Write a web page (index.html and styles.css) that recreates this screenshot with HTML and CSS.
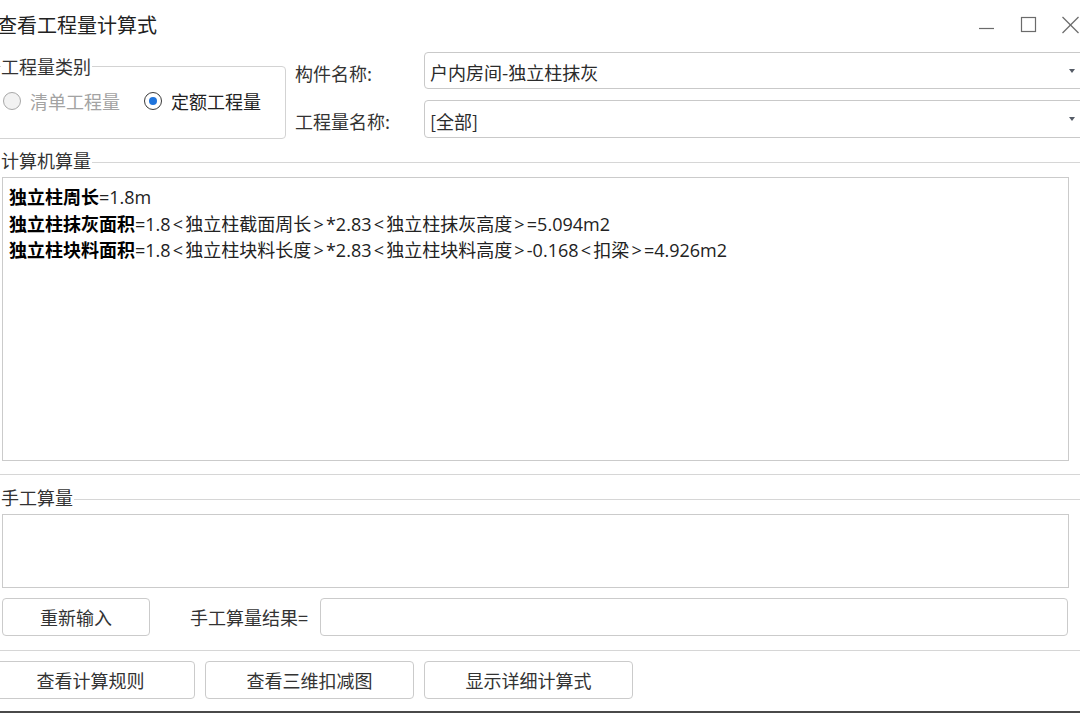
FILE: index.html
```html
<!DOCTYPE html>
<html lang="zh">
<head>
<meta charset="utf-8">
<title>查看工程量计算式</title>
<link rel="stylesheet" href="styles.css">
</head>
<body>
<div class="window">
  <div class="titlebar">
    <span class="title">查看工程量计算式</span>
    <svg class="controls" width="101" height="18" viewBox="0 0 101 18">
      <line x1="0" y1="12.5" x2="15" y2="12.5" stroke="#6b6b6b" stroke-width="1.2"/>
      <rect x="42.5" y="1.5" width="14" height="14" fill="none" stroke="#6b6b6b" stroke-width="1.2"/>
      <line x1="83.5" y1="1" x2="99.5" y2="17" stroke="#6b6b6b" stroke-width="1.2"/>
      <line x1="99.5" y1="1" x2="83.5" y2="17" stroke="#6b6b6b" stroke-width="1.2"/>
    </svg>
  </div>

  <div class="top">
    <fieldset class="group">
      <legend>工程量类别</legend>
      <div class="radios">
        <label class="radio disabled"><span class="circle"></span><span>清单工程量</span></label>
        <label class="radio"><span class="circle checked"></span><span>定额工程量</span></label>
      </div>
    </fieldset>
    <div class="fields">
      <div class="field">
        <span class="flabel">构件名称:</span>
        <div class="combo"><span class="ctext">户内房间-独立柱抹灰</span><span class="arrow"></span></div>
      </div>
      <div class="field">
        <span class="flabel">工程量名称:</span>
        <div class="combo"><span class="ctext">[全部]</span><span class="arrow"></span></div>
      </div>
    </div>
  </div>

  <div class="section-head head-auto">
    <span class="slabel">计算机算量</span><span class="sline"></span>
  </div>
  <div class="box box-auto">
    <div class="fline"><b>独立柱周长</b>=1.8m</div>
    <div class="fline"><b>独立柱抹灰面积</b>=1.8<span class="op">&lt;</span>独立柱截面周长<span class="op">&gt;</span>*2.83<span class="op">&lt;</span>独立柱抹灰高度<span class="op">&gt;</span>=5.094m2</div>
    <div class="fline"><b>独立柱块料面积</b>=1.8<span class="op">&lt;</span>独立柱块料长度<span class="op">&gt;</span>*2.83<span class="op">&lt;</span>独立柱块料高度<span class="op">&gt;</span>-0.168<span class="op">&lt;</span>扣梁<span class="op">&gt;</span>=4.926m2</div>
  </div>
  <div class="hr hr1"></div>

  <div class="section-head head-manual">
    <span class="slabel">手工算量</span><span class="sline"></span>
  </div>
  <div class="box box-manual"></div>
  <div class="manual-row">
    <button class="btn btn-reinput">重新输入</button>
    <span class="rlabel">手工算量结果=</span>
    <div class="rinput"></div>
  </div>
  <div class="hr hr2"></div>

  <div class="bottom-buttons">
    <button class="btn btn-wide btn-first">查看计算规则</button>
    <button class="btn btn-wide">查看三维扣减图</button>
    <button class="btn btn-wide">显示详细计算式</button>
  </div>
  <div class="bottom-edge"></div>
</div>
</body>
</html>
```

FILE: styles.css
```css
* { box-sizing: border-box; }

html, body {
  margin: 0;
  padding: 0;
  background: #ffffff;
}

body {
  width: 1080px;
  height: 714px;
  overflow: hidden;
  font-family: "Noto Sans CJK SC", "Microsoft YaHei", sans-serif;
  font-size: 18px;
  color: #333333;
}

.window {
  width: 1080px;
  height: 714px;
  display: flex;
  flex-direction: column;
  overflow: hidden;
}

/* title bar */
.titlebar {
  height: 50px;
  display: flex;
  align-items: center;
  flex-shrink: 0;
}

.title {
  font-size: 20px;
  line-height: 24px;
  margin-left: -3px;
  color: #222222;
}

.controls {
  margin-left: auto;
  margin-right: 0;
  display: block;
}

/* top area */
.top {
  display: flex;
  align-items: flex-start;
  margin-top: 2px;
  flex-shrink: 0;
}

.group {
  margin: 4px 0 0 -6px;
  padding: 0 0 0 6px;
  width: 292px;
  height: 83px;
  min-width: 0;
  border: 1px solid #d3d3d3;
  border-radius: 4px;
}

.group legend {
  padding: 0 1px 0 0;
  font-size: 18px;
  line-height: 20px;
  color: #333333;
}

.radios {
  display: flex;
  align-items: center;
  margin-top: 13px;
  height: 24px;
}

.radio {
  display: flex;
  align-items: center;
  line-height: 24px;
  color: #222222;
}

.radio + .radio {
  margin-left: 24px;
}

.radio.disabled {
  color: #a3a3a3;
}

.circle {
  width: 18px;
  height: 18px;
  border-radius: 50%;
  border: 1px solid #a8a8a8;
  background: #f2f2f2;
  margin: 0 9px 0 2px;
  display: flex;
  align-items: center;
  justify-content: center;
}

.circle.checked {
  border-color: #3a3a3a;
  background: #ffffff;
  margin-left: 0;
}

.circle.checked::after {
  content: "";
  width: 8px;
  height: 8px;
  border-radius: 50%;
  background: #1f74dc;
}

.fields {
  margin-left: 9px;
  flex: 1;
  display: flex;
  flex-direction: column;
  gap: 11px;
}

.field {
  display: flex;
  align-items: center;
}

.flabel {
  width: 129px;
  flex-shrink: 0;
  line-height: 22px;
  padding-top: 4px;
  color: #333333;
}

.combo {
  flex: 1;
  height: 37px;
  margin-right: -12px;
  border: 1px solid #c9c9c9;
  border-radius: 4px;
  display: flex;
  align-items: center;
  padding: 3px 0 0 5px;
}

.field + .field .combo {
  height: 38px;
}

.ctext {
  line-height: 22px;
  color: #2b2b2b;
}

.arrow {
  margin-left: auto;
  margin-right: 16px;
  width: 0;
  height: 0;
  border-left: 3.5px solid transparent;
  border-right: 3.5px solid transparent;
  border-top: 4px solid #555b66;
  margin-top: -3px;
}

/* section headers */
.section-head {
  display: flex;
  align-items: center;
  height: 20px;
  flex-shrink: 0;
}

.head-auto { margin-top: 11px; }
.head-manual { margin-top: 12px; }

.slabel {
  line-height: 20px;
  padding-left: 1px;
  color: #333333;
}

.sline {
  flex: 1;
  height: 1px;
  background: #d6d6d6;
  margin-top: 4px;
  margin-left: 1px;
}

/* text boxes */
.box {
  margin-left: 2px;
  width: 1067px;
  border: 1px solid #cbcbcb;
  flex-shrink: 0;
}

.box-auto {
  margin-top: 7px;
  height: 284px;
  padding: 6px 6px;
}

.box-manual {
  margin-top: 7px;
  height: 74px;
}

.fline {
  font-family: "Open Sans", "Noto Sans CJK SC", sans-serif;
  line-height: 25.5px;
  color: #222222;
  white-space: nowrap;
}

.fline b {
  font-family: "Noto Sans CJK SC", sans-serif;
  color: #000000;
  font-weight: 700;
}

.fline .op {
  padding: 0 2.2px;
}

.hr {
  height: 1px;
  background: #d6d6d6;
  flex-shrink: 0;
}

.hr1 { margin-top: 13px; }
.hr2 { margin-top: 14px; }

/* manual row */
.manual-row {
  display: flex;
  align-items: center;
  margin-top: 10px;
  height: 38px;
  flex-shrink: 0;
}

.btn {
  font-family: inherit;
  font-size: 18px;
  color: #333333;
  background: #ffffff;
  border: 1px solid #cbcbcb;
  border-radius: 4px;
  height: 38px;
  padding: 0;
  line-height: 22px;
}

.btn-reinput {
  margin-left: 2px;
  width: 148px;
}

.rlabel {
  margin-left: 40px;
  width: 130px;
  line-height: 22px;
  color: #333333;
}

.rinput {
  width: 748px;
  height: 38px;
  border: 1px solid #cbcbcb;
  border-radius: 4px;
}

/* bottom buttons */
.bottom-buttons {
  display: flex;
  gap: 10px;
  margin-top: 10px;
  flex-shrink: 0;
}

.btn-wide {
  width: 209px;
}

.btn-first {
  margin-left: -14px;
}

.bottom-edge {
  margin-top: 12px;
  height: 2px;
  background: #4a4a4a;
  flex-shrink: 0;
}
```
